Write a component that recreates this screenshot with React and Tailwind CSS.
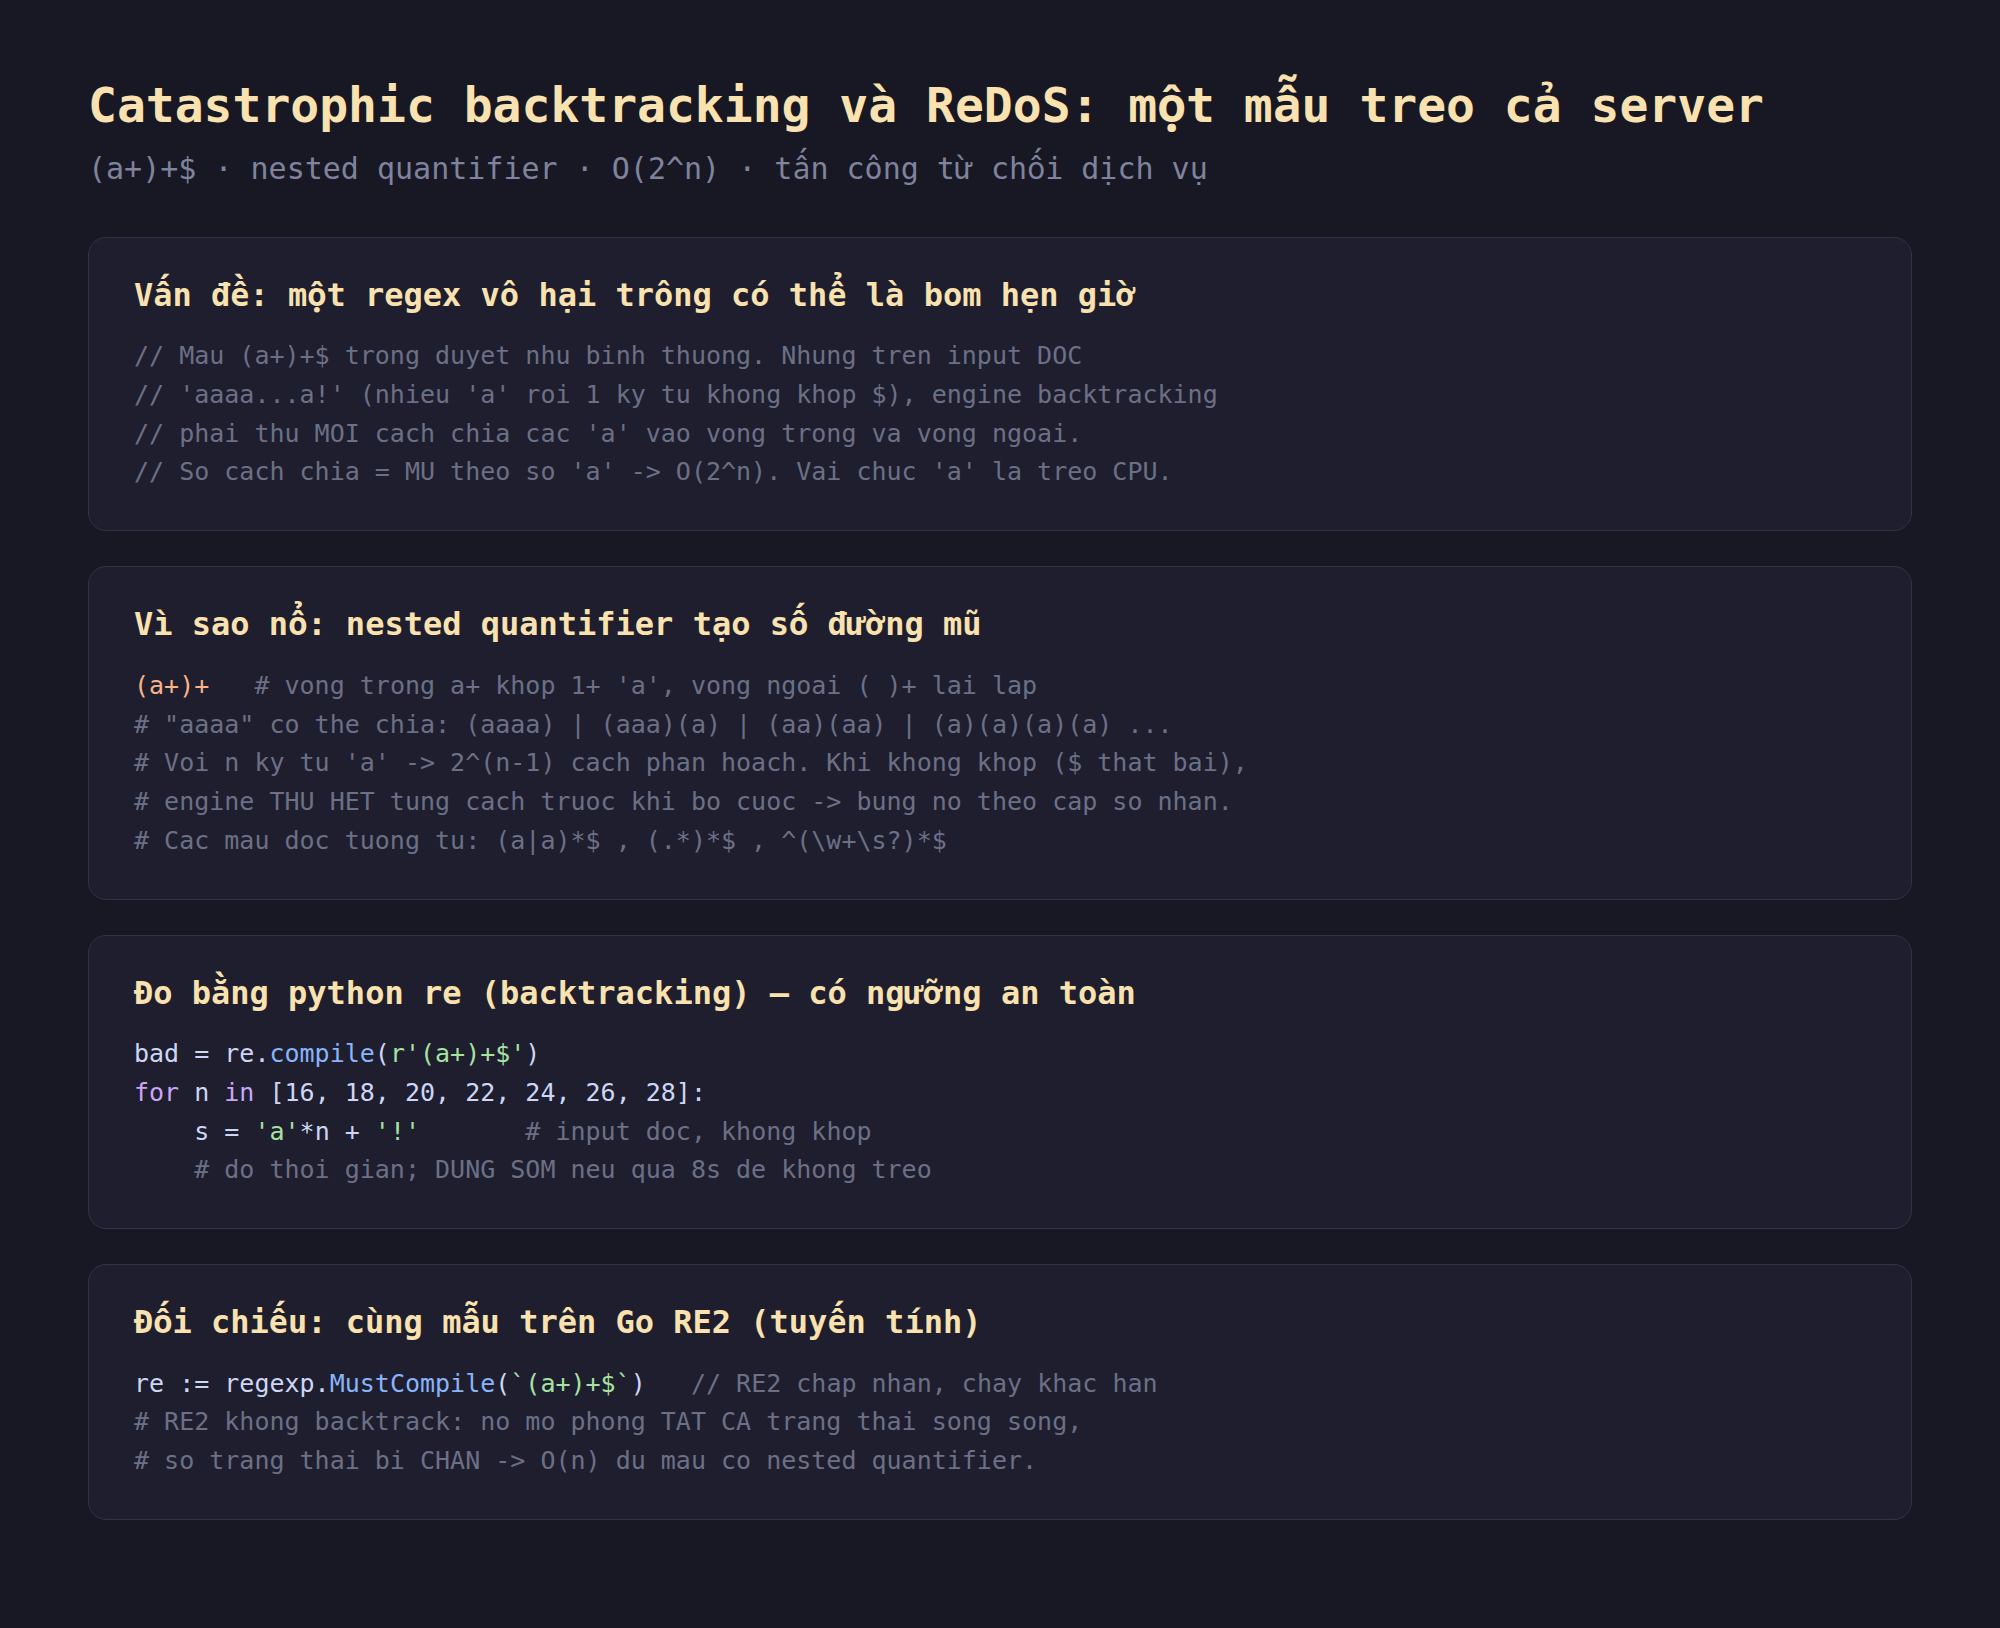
import React from 'react'

// DejaVu Sans Mono lacks the stacked Vietnamese tone glyphs (ấ, ề, ổ...), so
// those letters are taken from Noto Sans Mono, which has the same advance.
// leading-[0] keeps its taller metrics from growing the line box.
const STACKED = /([\u1EA4-\u1EB7\u1EBE-\u1EC7\u1ED0-\u1ED9])/

const Vi = ({ text }) =>
  text.split(STACKED).map((part, i) =>
    i % 2 === 1 ? (
      <span key={i} className="font-[family-name:Noto_Sans_Mono,monospace] leading-[0]">
        {part}
      </span>
    ) : (
      part
    )
  )

const C = ({ children }) => <span className="text-[#6c7086]">{children}</span>
const T = ({ children }) => <span className="text-[#cdd6f4]">{children}</span>
const Fn = ({ children }) => <span className="text-[#89b4fa]">{children}</span>
const Str = ({ children }) => <span className="text-[#a6e3a1]">{children}</span>
const Kw = ({ children }) => <span className="text-[#cba6f7]">{children}</span>
const Pe = ({ children }) => <span className="text-[#fab387]">{children}</span>

const sections = [
  {
    title: 'Vấn đề: một regex vô hại trông có thể là bom hẹn giờ',
    lines: [
      <C>// Mau (a+)+$ trong duyet nhu binh thuong. Nhung tren input DOC</C>,
      <C>// 'aaaa...a!' (nhieu 'a' roi 1 ky tu khong khop $), engine backtracking</C>,
      <C>// phai thu MOI cach chia cac 'a' vao vong trong va vong ngoai.</C>,
      <C>// So cach chia = MU theo so 'a' -&gt; O(2^n). Vai chuc 'a' la treo CPU.</C>,
    ],
  },
  {
    title: 'Vì sao nổ: nested quantifier tạo số đường mũ',
    lines: [
      <>
        <Pe>(a+)+</Pe>
        <C>{"   # vong trong a+ khop 1+ 'a', vong ngoai ( )+ lai lap"}</C>
      </>,
      <C>{'# "aaaa" co the chia: (aaaa) | (aaa)(a) | (aa)(aa) | (a)(a)(a)(a) ...'}</C>,
      <C>{"# Voi n ky tu 'a' -> 2^(n-1) cach phan hoach. Khi khong khop ($ that bai),"}</C>,
      <C>{'# engine THU HET tung cach truoc khi bo cuoc -> bung no theo cap so nhan.'}</C>,
      <C>{'# Cac mau doc tuong tu: (a|a)*$ , (.*)*$ , ^(\\w+\\s?)*$'}</C>,
    ],
  },
  {
    title: 'Đo bằng python re (backtracking) — có ngưỡng an toàn',
    lines: [
      <>
        <T>bad = re.</T>
        <Fn>compile</Fn>
        <T>(</T>
        <Str>r'(a+)+$'</Str>
        <T>)</T>
      </>,
      <>
        <Kw>for</Kw>
        <T> n </T>
        <Kw>in</Kw>
        <T> [16, 18, 20, 22, 24, 26, 28]:</T>
      </>,
      <>
        <T>{'    s = '}</T>
        <Str>'a'</Str>
        <T>*n + </T>
        <Str>'!'</Str>
        <C>{'       # input doc, khong khop'}</C>
      </>,
      <C>{'    # do thoi gian; DUNG SOM neu qua 8s de khong treo'}</C>,
    ],
  },
  {
    title: 'Đối chiếu: cùng mẫu trên Go RE2 (tuyến tính)',
    lines: [
      <>
        <T>re := regexp.</T>
        <Fn>MustCompile</Fn>
        <T>(</T>
        <Str>`(a+)+$`</Str>
        <T>)</T>
        <C>{'   // RE2 chap nhan, chay khac han'}</C>
      </>,
      <C>{'# RE2 khong backtrack: no mo phong TAT CA trang thai song song,'}</C>,
      <C>{'# so trang thai bi CHAN -> O(n) du mau co nested quantifier.'}</C>,
    ],
  },
]

const App = () => {
  return (
    <div className="min-h-screen bg-[#181825] px-[88px] pt-[77px] pb-[110px] font-[family-name:DejaVu_Sans_Mono,monospace]">
      <h1 className="text-[48px] leading-[1.2] font-bold text-[#f9e2af]">
        <Vi text="Catastrophic backtracking và ReDoS: một mẫu treo cả server" />
      </h1>
      <p className="mt-[11px] text-[30px] leading-[1.5] text-[#7f849c]">
        <Vi text="(a+)+$ · nested quantifier · O(2^n) · tấn công từ chối dịch vụ" />
      </p>

      <div className="mt-[46px] flex flex-col gap-[35px]">
        {sections.map((s) => (
          <section
            key={s.title}
            className="bg-[#1e1e2e] border border-[#313244] rounded-[18px] px-[45px] pt-[37px] pb-[38px]"
          >
            <h2 className="text-[32px] leading-[1.3] font-bold text-[#f9e2af]">
              <Vi text={s.title} />
            </h2>
            <div className="mt-[21px] text-[25px] leading-[1.55] whitespace-pre">
              {s.lines.map((line, i) => (
                <div key={i}>{line}</div>
              ))}
            </div>
          </section>
        ))}
      </div>
    </div>
  )
}

export default App
